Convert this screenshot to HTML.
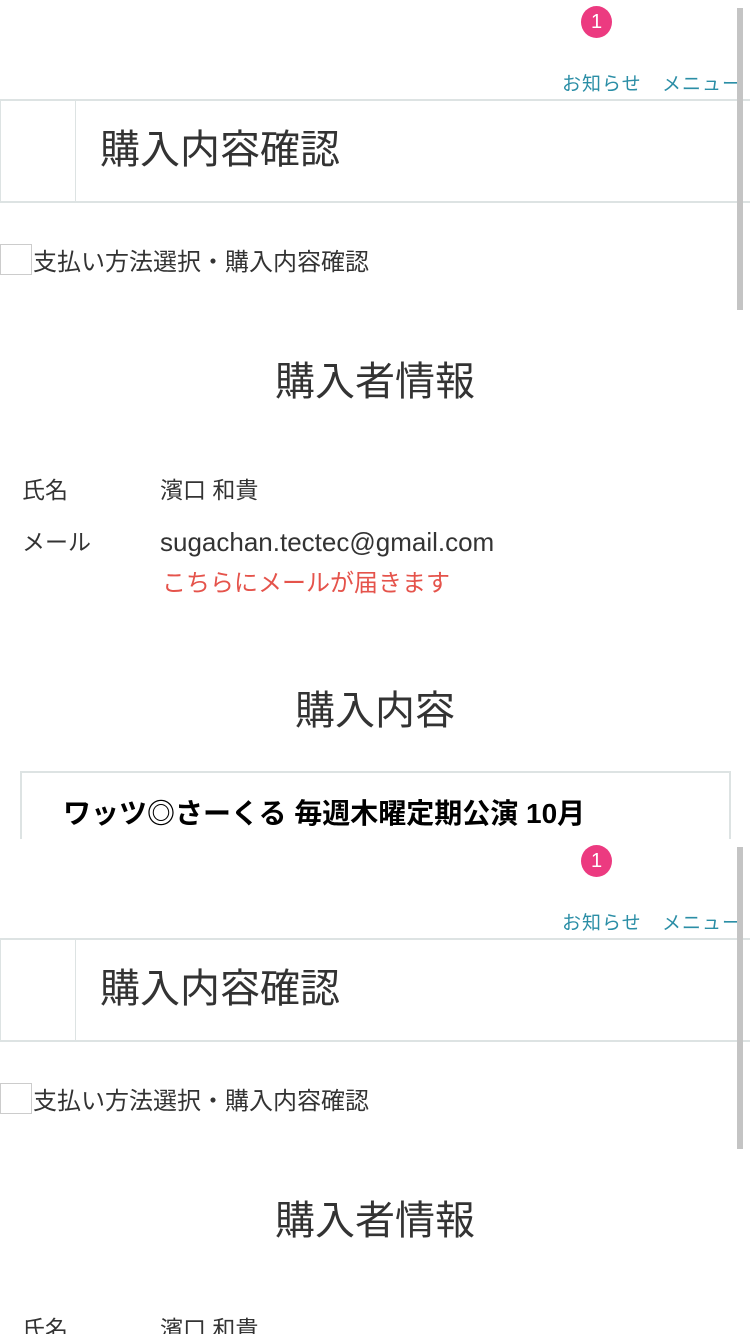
<!DOCTYPE html>
<html><head><meta charset="utf-8"><style>
*{margin:0;padding:0;box-sizing:border-box}
body{width:750px;height:1334px;overflow:hidden;background:#fff;font-family:"Liberation Sans","Noto Sans CJK JP",sans-serif;color:#333;position:relative}
.pg{position:absolute;left:0;width:750px;height:839px;overflow:hidden}
.a{position:absolute;white-space:nowrap;line-height:1.2}
.badge{left:581px;top:6px;width:31px;height:32px;border-radius:50%;background:#ec3a80;color:#fff;font-size:20px;text-align:center;line-height:32px}
.lnk{top:74px;font-size:19px;color:#2b8ea6;letter-spacing:1px}
.sb{left:737px;top:8px;width:6px;height:302px;background:#c4c4c4}
.hdr{left:0;top:99px;width:750px;height:104px;border-top:2px solid #dde3e3;border-bottom:2px solid #dde3e3;border-left:1px solid #dde3e3}
.div{left:75px;top:101px;width:1px;height:100px;background:#dde3e3}
.t{font-size:40px;color:#333}
</style></head><body>
<div class="pg" style="top:0">
<div class="a badge">1</div>
<div class="a lnk" style="left:562px">お知らせ</div>
<div class="a lnk" style="left:662px">メニュー</div>
<div class="a hdr"></div><div class="a div"></div>
<div class="a t" style="left:100px;top:126px">購入内容確認</div>
<div class="a sb"></div>
<div class="a" style="left:0;top:244px;width:32px;height:31px;border:1px solid #ccc"></div>
<div class="a" style="left:33px;top:249px;font-size:24px">支払い方法選択・購入内容確認</div>
<div class="a t" style="left:0;width:750px;text-align:center;top:358px">購入者情報</div>
<div class="a" style="left:22px;top:477px;font-size:23px">氏名</div>
<div class="a" style="left:160px;top:477px;font-size:23px">濱口 和貴</div>
<div class="a" style="left:22px;top:529px;font-size:23px">メール</div>
<div class="a" style="left:160px;top:527px;font-size:26px">sugachan.tectec@gmail.com</div>
<div class="a" style="left:162px;top:570px;font-size:24px;color:#e5534b">こちらにメールが届きます</div>
<div class="a t" style="left:0;width:750px;text-align:center;top:687px">購入内容</div>
<div class="a" style="left:20px;top:771px;width:711px;height:120px;border:2px solid #dde3e3"></div>
<div class="a" style="left:63px;top:797px;font-size:28px;font-weight:bold;color:#000">ワッツ◎さーくる 毎週木曜定期公演 10月</div>
</div>
<div class="pg" style="top:839px;height:495px">
<div class="a badge">1</div>
<div class="a lnk" style="left:562px">お知らせ</div>
<div class="a lnk" style="left:662px">メニュー</div>
<div class="a hdr"></div><div class="a div"></div>
<div class="a t" style="left:100px;top:126px">購入内容確認</div>
<div class="a sb"></div>
<div class="a" style="left:0;top:244px;width:32px;height:31px;border:1px solid #ccc"></div>
<div class="a" style="left:33px;top:249px;font-size:24px">支払い方法選択・購入内容確認</div>
<div class="a t" style="left:0;width:750px;text-align:center;top:358px">購入者情報</div>
<div class="a" style="left:22px;top:477px;font-size:23px">氏名</div>
<div class="a" style="left:160px;top:477px;font-size:23px">濱口 和貴</div>
</div>
</body></html>
